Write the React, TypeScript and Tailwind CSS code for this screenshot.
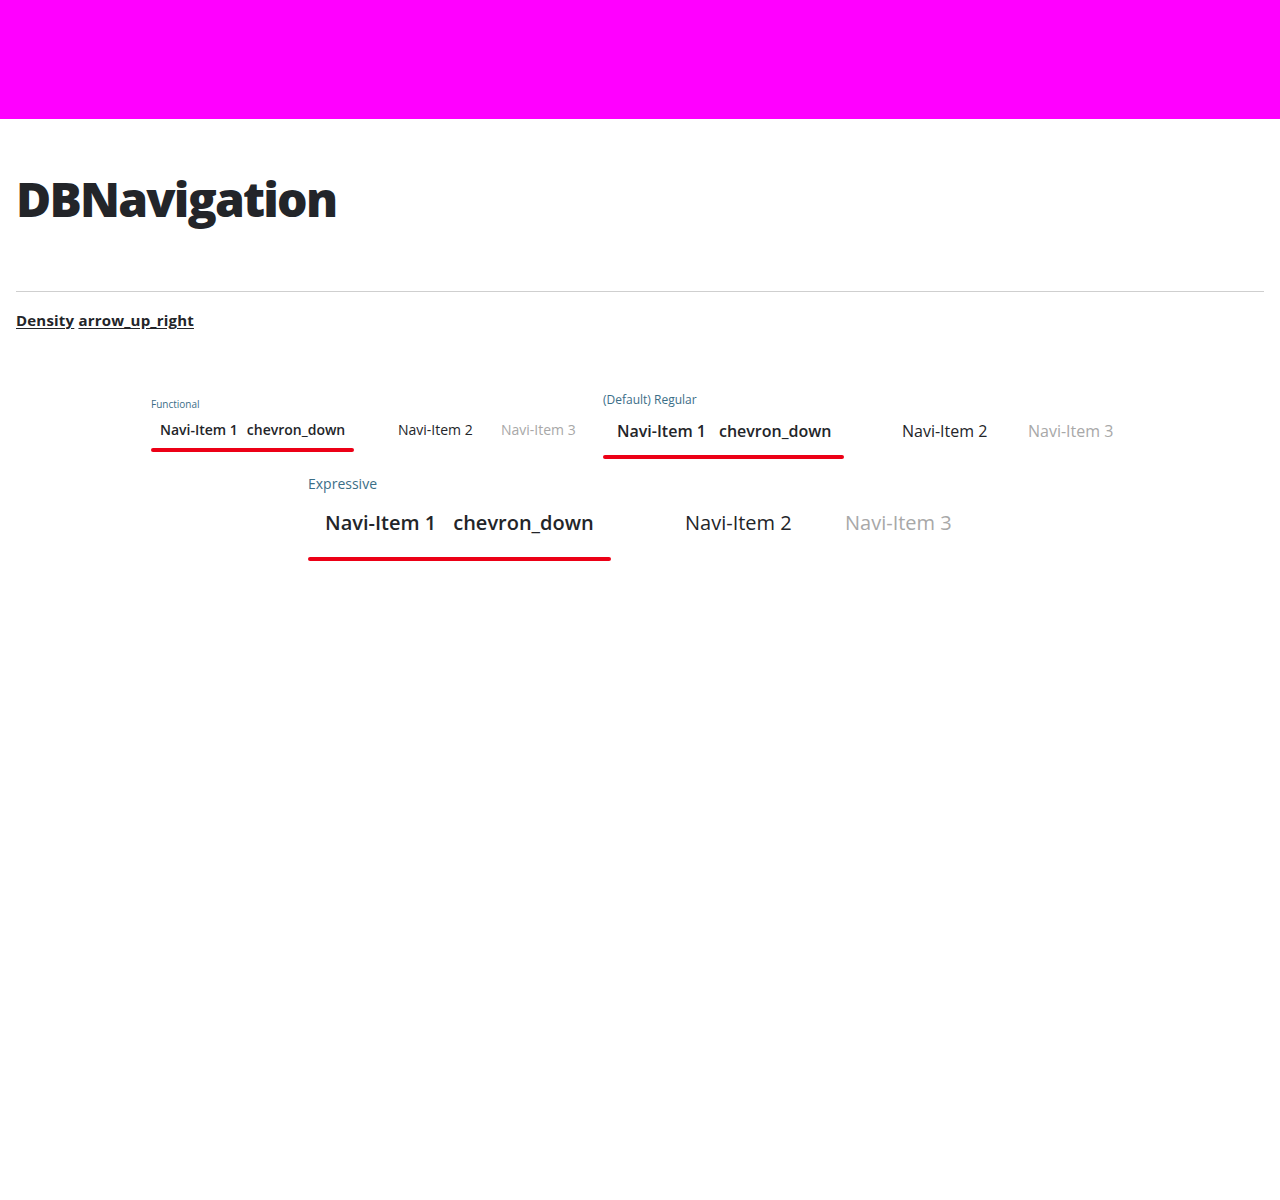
const FONT = { fontFamily: '"Open Sans", "Liberation Sans", sans-serif' };

type Density = {
  label: string;
  labelClass: string;
  textClass: string;
  labelWrap: string;
  itemBox: string;
  firstWidth: string;
  firstPad: string;
  firstGap: string;
  second: string;
  third: string;
  bar: string;
};

const DENSITIES: Density[] = [
  {
    label: 'Functional',
    labelClass: 'text-[10px] leading-[12px]',
    labelWrap: 'h-[14px] items-start',
    textClass: 'text-[14px] leading-[20px]',
    itemBox: 'h-[36px] pb-[1px]',
    firstWidth: 'w-[203px]',
    firstPad: 'pl-[9px]',
    firstGap: 'gap-[9px]',
    second: 'ml-[44px] w-[103px]',
    third: 'w-[86px]',
    bar: 'h-[4px]',
  },
  {
    label: '(Default) Regular',
    labelClass: 'text-[12px] leading-[16px]',
    labelWrap: 'h-[16px] items-center pt-[1px]',
    textClass: 'text-[16px] leading-[24px]',
    itemBox: 'h-[48px]',
    firstWidth: 'w-[241px]',
    firstPad: 'pl-[14px]',
    firstGap: 'gap-[13px]',
    second: 'ml-[58px] w-[126px]',
    third: 'w-[101px]',
    bar: 'h-[4px]',
  },
  {
    label: 'Expressive',
    labelClass: 'text-[14px] leading-[20px]',
    labelWrap: 'h-[20px] items-center',
    textClass: 'text-[20px] leading-[28px]',
    itemBox: 'h-[58px] pb-[1px]',
    firstWidth: 'w-[303px]',
    firstPad: 'pl-[17px]',
    firstGap: 'gap-[17px]',
    second: 'ml-[74px] w-[160px]',
    third: 'w-[127px]',
    bar: 'mt-[5px] h-[4px]',
  },
];

function NavExample({ d }: { d: Density }) {
  return (
    <div className="flex flex-col">
      <div className={`${d.labelWrap} flex`}>
        <span className={`${d.labelClass} text-[#3b6e87]`}>{d.label}</span>
      </div>
      <nav className={`flex ${d.textClass}`}>
        <div className={`${d.firstWidth} flex flex-col`}>
          <div className={`${d.itemBox} ${d.firstPad} flex items-center`}>
            <span className={`flex ${d.firstGap} font-semibold text-[#232529]`}>
              <span>Navi-Item 1</span>
              <span>chevron_down</span>
            </span>
          </div>
          <div className={`${d.bar} rounded-full bg-[#ec0016]`} />
        </div>
        <div className={`${d.second} ${d.itemBox} flex items-center text-[#232529]`}>Navi-Item 2</div>
        <div className={`${d.third} ${d.itemBox} flex items-center text-[#a8a8a8]`}>Navi-Item 3</div>
      </nav>
    </div>
  );
}

export default function App() {
  return (
    <div className="min-h-[1200px] bg-white" style={FONT}>
      <header className="h-[119px] bg-[#ff00ff]" />
      <main className="px-4">
        <h1 className="mt-[48px] text-[48px] leading-[64px] font-extrabold tracking-[-1.8px] text-[#232529]">
          DBNavigation
        </h1>
        <hr className="mt-[60px] border-0 border-t border-[#cfcfcf]" />
        <div className="mt-[18px] text-[15px] leading-[20px] font-bold tracking-[0.2px] text-[#232529]">
          <a href="#" className="underline underline-offset-2">Density</a>{' '}
          <a href="#" className="underline underline-offset-2">arrow_up_right</a>
        </div>
        <div className="mt-[61px] flex flex-wrap items-center justify-center gap-x-4 gap-y-[15px]">
          {DENSITIES.map((d) => (
            <NavExample key={d.label} d={d} />
          ))}
        </div>
      </main>
    </div>
  );
}
